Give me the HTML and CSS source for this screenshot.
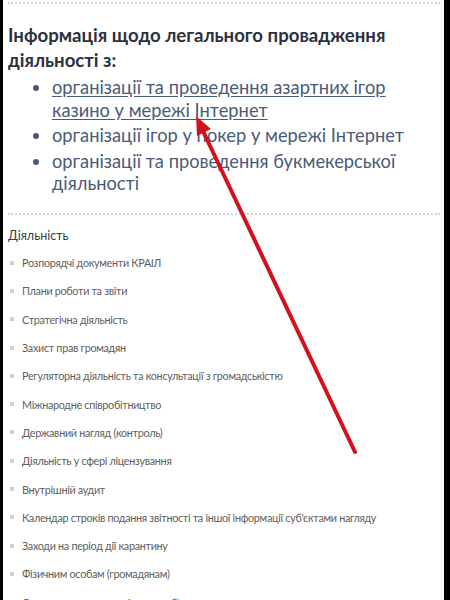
FILE: index.html
```html
<!DOCTYPE html>
<html lang="uk">
<head>
<meta charset="utf-8">
<link rel="stylesheet" href="styles.css">
</head>
<body>
<div class="frame">
  <div class="dots dots-top"></div>
  <h2 class="title">Інформація щодо легального провадження діяльності з:</h2>
  <ul class="links">
    <li><a class="link link-active" href="#">організації та проведення азартних ігор казино у мережі Інтернет</a></li>
    <li><a class="link" href="#">організації ігор у покер у мережі Інтернет</a></li>
    <li><a class="link" href="#">організації та проведення букмекерської діяльності</a></li>
  </ul>
  <div class="dots dots-mid"></div>
  <div class="section-title">Діяльність</div>
  <ul class="menu">
    <li>Розпорядчі документи КРАІЛ</li>
    <li>Плани роботи та звіти</li>
    <li>Стратегічна діяльність</li>
    <li>Захист прав громадян</li>
    <li>Регуляторна діяльність та консультації з громадськістю</li>
    <li>Міжнародне співробітництво</li>
    <li>Державний нагляд (контроль)</li>
    <li>Діяльність у сфері ліцензування</li>
    <li>Внутрішній аудит</li>
    <li>Календар строків подання звітності та іншої інформації суб'єктами нагляду</li>
    <li>Заходи на період дії карантину</li>
    <li>Фізичним особам (громадянам)</li>
    <li>Операторам азартних ігор та суб'єктам господарювання</li>
  </ul>
  <svg class="arrow" width="450" height="600" viewBox="0 0 450 600">
    <line x1="355" y1="452" x2="203" y2="131" stroke="#d1121c" stroke-width="4" stroke-linecap="round"/>
    <polygon points="196,116 211,129 197,136" fill="#d1121c"/>
  </svg>
</div>
</body>
</html>
```
FILE: styles.css
```css
html, body {
  margin: 0;
  padding: 0;
  background: #fff;
}
body {
  width: 450px;
  height: 600px;
  overflow: hidden;
  font-family: Lato, "Noto Sans", sans-serif;
}
.frame {
  position: relative;
  box-sizing: border-box;
  width: 450px;
  height: 600px;
  border-left: 3px solid #000;
  border-right: 6px solid #000;
  padding: 0 4px 0 5px;
  overflow: hidden;
}
.dots {
  border-top: 2px dotted #d4d4d4;
}
.dots-top {
  margin-top: 2px;
}
.title {
  margin: 19px 0 0;
  font-size: 18.6px;
  line-height: 25px;
  font-weight: 700;
  color: #2c313d;
}
.links {
  margin: 3px 0 0;
  padding-left: 44px;
  font-size: 18.3px;
  line-height: 22.5px;
  color: #4a5b78;
}
.links li + li {
  margin-top: 3px;
}
.link {
  color: #4a5b78;
  text-decoration: none;
}
.link-active {
  text-decoration: underline;
  text-underline-offset: 2px;
}
.dots-mid {
  margin-top: 18px;
}
.section-title {
  margin-top: 13px;
  font-size: 12.5px;
  line-height: 16px;
  color: #3d3d3d;
}
.menu {
  list-style: none;
  margin: 5px 0 0;
  padding: 0;
}
.menu li {
  display: flex;
  align-items: center;
  gap: 8px;
  height: 28.3px;
  font-size: 10.8px;
  letter-spacing: -0.3px;
  color: #5e5e5e;
  padding-left: 2px;
  white-space: nowrap;
}
.menu li::before {
  content: "";
  width: 4px;
  height: 4px;
  background: #cfcfcf;
  flex: none;
}
.arrow {
  position: absolute;
  left: -3px;
  top: 0;
  pointer-events: none;
}
```
